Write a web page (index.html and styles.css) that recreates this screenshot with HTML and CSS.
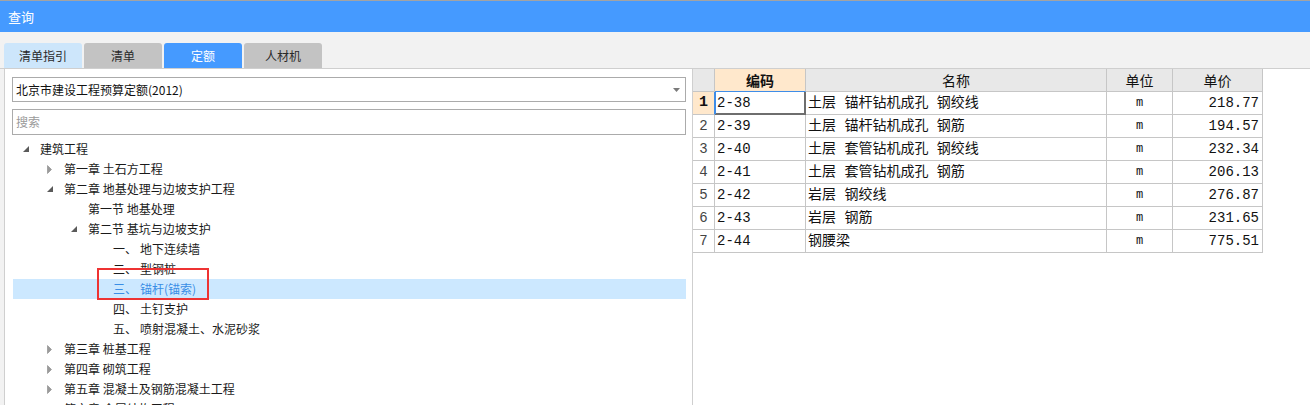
FILE: index.html
```html
<!DOCTYPE html>
<html lang="zh-CN">
<head>
<meta charset="utf-8">
<title>查询</title>
<link rel="stylesheet" href="styles.css">
</head>
<body>
<div class="titlebar">查询</div>
<div class="tabbar">
  <div class="tab tab-light">清单指引</div>
  <div class="tab tab-gray">清单</div>
  <div class="tab tab-blue">定额</div>
  <div class="tab tab-gray">人材机</div>
</div>
<div class="main">
  <div class="left">
    <div class="select">
      <span>北京市建设工程预算定额(2012)</span>
      <svg class="arrow" width="7" height="4" viewBox="0 0 7 4"><polygon points="0,0 7,0 3.5,4" fill="#7a7a7a"/></svg>
    </div>
    <div class="search">搜索</div>
    <div class="tree">
      <div class="row lv0"><span class="tg"><svg width="6" height="6" viewBox="0 0 6 6"><polygon points="6,0 6,6 0,6" fill="#5a5a5a"/></svg></span>建筑工程</div>
      <div class="row lv1"><span class="tg"><svg class="col" width="5" height="9" viewBox="0 0 5 9"><polygon points="0.5,0.5 4.5,4.5 0.5,8.5" fill="#9a9a9a" stroke="#8a8a8a" stroke-width="0.6"/></svg></span>第一章 土石方工程</div>
      <div class="row lv1"><span class="tg"><svg width="6" height="6" viewBox="0 0 6 6"><polygon points="6,0 6,6 0,6" fill="#5a5a5a"/></svg></span>第二章 地基处理与边坡支护工程</div>
      <div class="row lv2"><span class="tg"></span>第一节 地基处理</div>
      <div class="row lv2"><span class="tg"><svg width="6" height="6" viewBox="0 0 6 6"><polygon points="6,0 6,6 0,6" fill="#5a5a5a"/></svg></span>第二节 基坑与边坡支护</div>
      <div class="row lv3"><span class="tg"></span><span class="num">一、</span>地下连续墙</div>
      <div class="row lv3"><span class="tg"></span><span class="num">二、</span>型钢桩</div>
      <div class="row lv3 selected"><span class="tg"></span><span class="num">三、</span>锚杆(锚索)</div>
      <div class="row lv3"><span class="tg"></span><span class="num">四、</span>土钉支护</div>
      <div class="row lv3"><span class="tg"></span><span class="num">五、</span>喷射混凝土、水泥砂浆</div>
      <div class="row lv1"><span class="tg"><svg class="col" width="5" height="9" viewBox="0 0 5 9"><polygon points="0.5,0.5 4.5,4.5 0.5,8.5" fill="#9a9a9a" stroke="#8a8a8a" stroke-width="0.6"/></svg></span>第三章 桩基工程</div>
      <div class="row lv1"><span class="tg"><svg class="col" width="5" height="9" viewBox="0 0 5 9"><polygon points="0.5,0.5 4.5,4.5 0.5,8.5" fill="#9a9a9a" stroke="#8a8a8a" stroke-width="0.6"/></svg></span>第四章 砌筑工程</div>
      <div class="row lv1"><span class="tg"><svg class="col" width="5" height="9" viewBox="0 0 5 9"><polygon points="0.5,0.5 4.5,4.5 0.5,8.5" fill="#9a9a9a" stroke="#8a8a8a" stroke-width="0.6"/></svg></span>第五章 混凝土及钢筋混凝土工程</div>
      <div class="row lv1"><span class="tg"><svg class="col" width="5" height="9" viewBox="0 0 5 9"><polygon points="0.5,0.5 4.5,4.5 0.5,8.5" fill="#9a9a9a" stroke="#8a8a8a" stroke-width="0.6"/></svg></span>第六章 金属结构工程</div>
    </div>
    <div class="redbox"></div>
  </div>
  <div class="right">
    <table class="grid">
      <colgroup>
        <col class="c-no"><col class="c-code"><col class="c-name"><col class="c-unit"><col class="c-price">
      </colgroup>
      <thead>
        <tr>
          <th class="corner"></th>
          <th class="hl bold act-b">编码</th>
          <th>名称</th>
          <th>单位</th>
          <th>单价</th>
        </tr>
      </thead>
      <tbody>
        <tr><td class="no hl act-no bold">1</td><td class="active">2-38</td><td>土层 锚杆钻机成孔 钢绞线</td><td class="unit">m</td><td class="price">218.77</td></tr>
        <tr><td class="no">2</td><td>2-39</td><td>土层 锚杆钻机成孔 钢筋</td><td class="unit">m</td><td class="price">194.57</td></tr>
        <tr><td class="no">3</td><td>2-40</td><td>土层 套管钻机成孔 钢绞线</td><td class="unit">m</td><td class="price">232.34</td></tr>
        <tr><td class="no">4</td><td>2-41</td><td>土层 套管钻机成孔 钢筋</td><td class="unit">m</td><td class="price">206.13</td></tr>
        <tr><td class="no">5</td><td>2-42</td><td>岩层 钢绞线</td><td class="unit">m</td><td class="price">276.87</td></tr>
        <tr><td class="no">6</td><td>2-43</td><td>岩层 钢筋</td><td class="unit">m</td><td class="price">231.65</td></tr>
        <tr><td class="no">7</td><td>2-44</td><td>钢腰梁</td><td class="unit">m</td><td class="price">775.51</td></tr>
      </tbody>
    </table>
  </div>
</div>
</body>
</html>
```

FILE: styles.css
```css
html, body {
  margin: 0;
  padding: 0;
}
body {
  width: 1310px;
  height: 405px;
  overflow: hidden;
  background: #f2f2f2;
  font-family: "Noto Sans CJK SC", "Noto Sans", sans-serif;
  font-size: 12px;
  color: #1a1a1a;
}
.titlebar {
  border-top: 1px solid #a3a3a3;
  height: 31px;
  background: #459aff;
  color: #ffffff;
  font-size: 13px;
  line-height: 31px;
  padding-left: 8px;
}
.tabbar {
  height: 25px;
  padding: 11px 0 0 4px;
  display: flex;
  gap: 2px;
}
.tab {
  width: 78px;
  height: 25px;
  line-height: 25px;
  text-align: center;
  font-size: 12px;
  border-radius: 3px 3px 0 0;
  color: #2a2a2a;
}
.tab-light { background: #cde6fb; }
.tab-gray { background: #c3c3c3; }
.tab-blue { background: #459aff; color: #ffffff; }

.main {
  display: flex;
  border-top: 1px solid #cfcfcf;
  padding-left: 4px;
  height: 336px;
}
.left {
  position: relative;
  flex: none;
  width: 674px;
  padding: 8px 6px 0 7px;
  border-left: 1px solid #cfcfcf;
  background: #ffffff;
  overflow: hidden;
}
.select {
  height: 23px;
  border: 1px solid #ababab;
  display: flex;
  align-items: center;
  justify-content: space-between;
  padding: 0 4px 0 3px;
  font-size: 12px;
  color: #111;
  margin-bottom: 7px;
}
.select .arrow { margin-right: 1px; }
.search {
  height: 24px;
  line-height: 24px;
  border: 1px solid #ababab;
  padding-left: 3px;
  color: #9a9a9a;
  font-size: 12px;
  margin-bottom: 4px;
}
.row {
  height: 20px;
  line-height: 20px;
  display: flex;
  align-items: center;
  white-space: nowrap;
  font-size: 12px;
}
.row .tg {
  width: 18px;
  height: 20px;
  flex: none;
  display: flex;
  align-items: center;
}
.row .tg svg { margin-left: 1px; }
.lv0 { padding-left: 10px; }
.lv1 { padding-left: 34px; }
.lv2 { padding-left: 58px; }
.lv3 { padding-left: 83px; }
.row .num { display: inline-block; width: 27px; }
.row.selected {
  margin-left: 1px;
  padding-left: 82px;
  background: #cce8ff;
  color: #3a8ee6;
}
.redbox {
  position: absolute;
  left: 92px;
  top: 199px;
  width: 112px;
  height: 32px;
  box-sizing: border-box;
  border: 2px solid #ee3333;
}

.right {
  flex: 1;
  border-left: 1px solid #cfcfcf;
  background: #ffffff;
}
.grid {
  border-collapse: separate;
  border-spacing: 0;
  table-layout: fixed;
  width: 570px;
  font-family: "Liberation Mono", "Noto Sans CJK SC", monospace;
  font-size: 14px;
  color: #111;
}
.c-no { width: 22px; }
.c-code { width: 91px; }
.c-name { width: 301px; }
.c-unit { width: 66px; }
.c-price { width: 90px; }
.grid th, .grid td {
  height: 22px;
  padding: 0 2px;
  border-right: 1px solid #c6c6c6;
  border-bottom: 1px solid #c6c6c6;
  white-space: nowrap;
  overflow: hidden;
  line-height: 22px;
}
.grid th {
  background: #e8e8e8;
  font-weight: normal;
  text-align: center;
  font-family: "Noto Sans CJK SC", sans-serif;
  font-size: 14px;
}
.grid th.bold { font-weight: bold; }
.grid .hl { background: #ffe8cc; }
.grid th.act-b { border-bottom-color: #3f8de8; }
.grid td.no {
  text-align: center;
  padding: 0;
  color: #444;
}
.grid td.no.bold { font-weight: bold; color: #111; font-size: 15px; }
.grid td.act-no { border-right-color: #3f8de8; }
.grid td.active {
  border-right: 1px solid #6e6e6e;
  border-bottom: 1px solid #6e6e6e;
  box-shadow: inset 1px 0 0 #3f8de8, inset -1px -1px 0 #6e6e6e;
}
.grid td.unit {
  text-align: center;
  font-size: 12px;
}
.grid td.price {
  text-align: right;
  padding-right: 3px;
}
```
